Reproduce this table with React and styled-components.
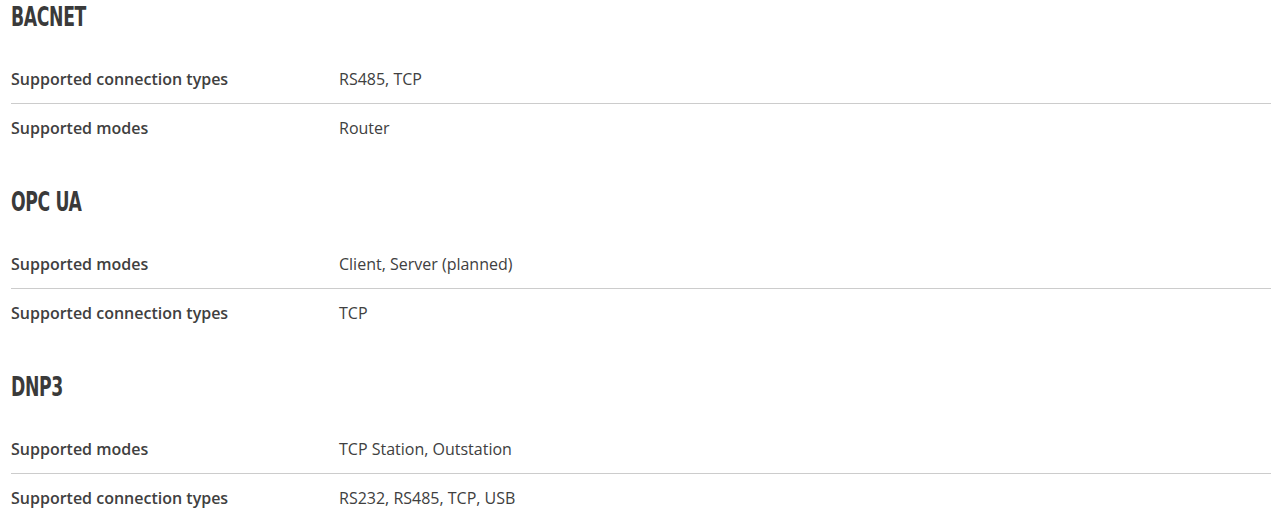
import React from 'react';
import styled, {createGlobalStyle} from 'styled-components';

const GlobalStyle = createGlobalStyle`
  body {
    margin: 0;
    background: #fff;
    font-family: 'Open Sans', 'Noto Sans', sans-serif;
    color: #404040;
  }
`;

const Page = styled.div`
  padding: 0 9px 0 11px;
`;

const Section = styled.section`
  margin-bottom: 33px;
`;

const Heading = styled.h2`
  margin: 0 0 21px;
  font-family: 'DejaVu Sans Condensed', 'DejaVu Sans', sans-serif;
  font-stretch: condensed;
  font-weight: 700;
  font-size: 27px;
  line-height: 34px;
  color: #3a3a3a;
  letter-spacing: -0.5px;
  transform: scaleX(0.71);
  transform-origin: left center;
`;

const Table = styled.div`
  display: flex;
  flex-direction: column;
`;

const Row = styled.div`
  display: grid;
  grid-template-columns: 328px 1fr;
  align-items: center;
  height: 48px;
  font-size: 16px;
  line-height: 22px;

  & + & {
    border-top: 1px solid #cccccc;
  }
`;

const Label = styled.div`
  font-weight: 600;
`;

const Value = styled.div`
  font-weight: 400;
`;

const sections = [
  {
    title: 'BACNET',
    rows: [
      ['Supported connection types', 'RS485, TCP'],
      ['Supported modes', 'Router']
    ]
  },
  {
    title: 'OPC UA',
    rows: [
      ['Supported modes', 'Client, Server (planned)'],
      ['Supported connection types', 'TCP']
    ]
  },
  {
    title: 'DNP3',
    rows: [
      ['Supported modes', 'TCP Station, Outstation'],
      ['Supported connection types', 'RS232, RS485, TCP, USB']
    ]
  }
];

export default function App() {
  return (
    <>
      <GlobalStyle />
      <Page>
        {sections.map(({title, rows}) => (
          <Section key={title}>
            <Heading>{title}</Heading>
            <Table>
              {rows.map(([label, value]) => (
                <Row key={label}>
                  <Label>{label}</Label>
                  <Value>{value}</Value>
                </Row>
              ))}
            </Table>
          </Section>
        ))}
      </Page>
    </>
  );
}
